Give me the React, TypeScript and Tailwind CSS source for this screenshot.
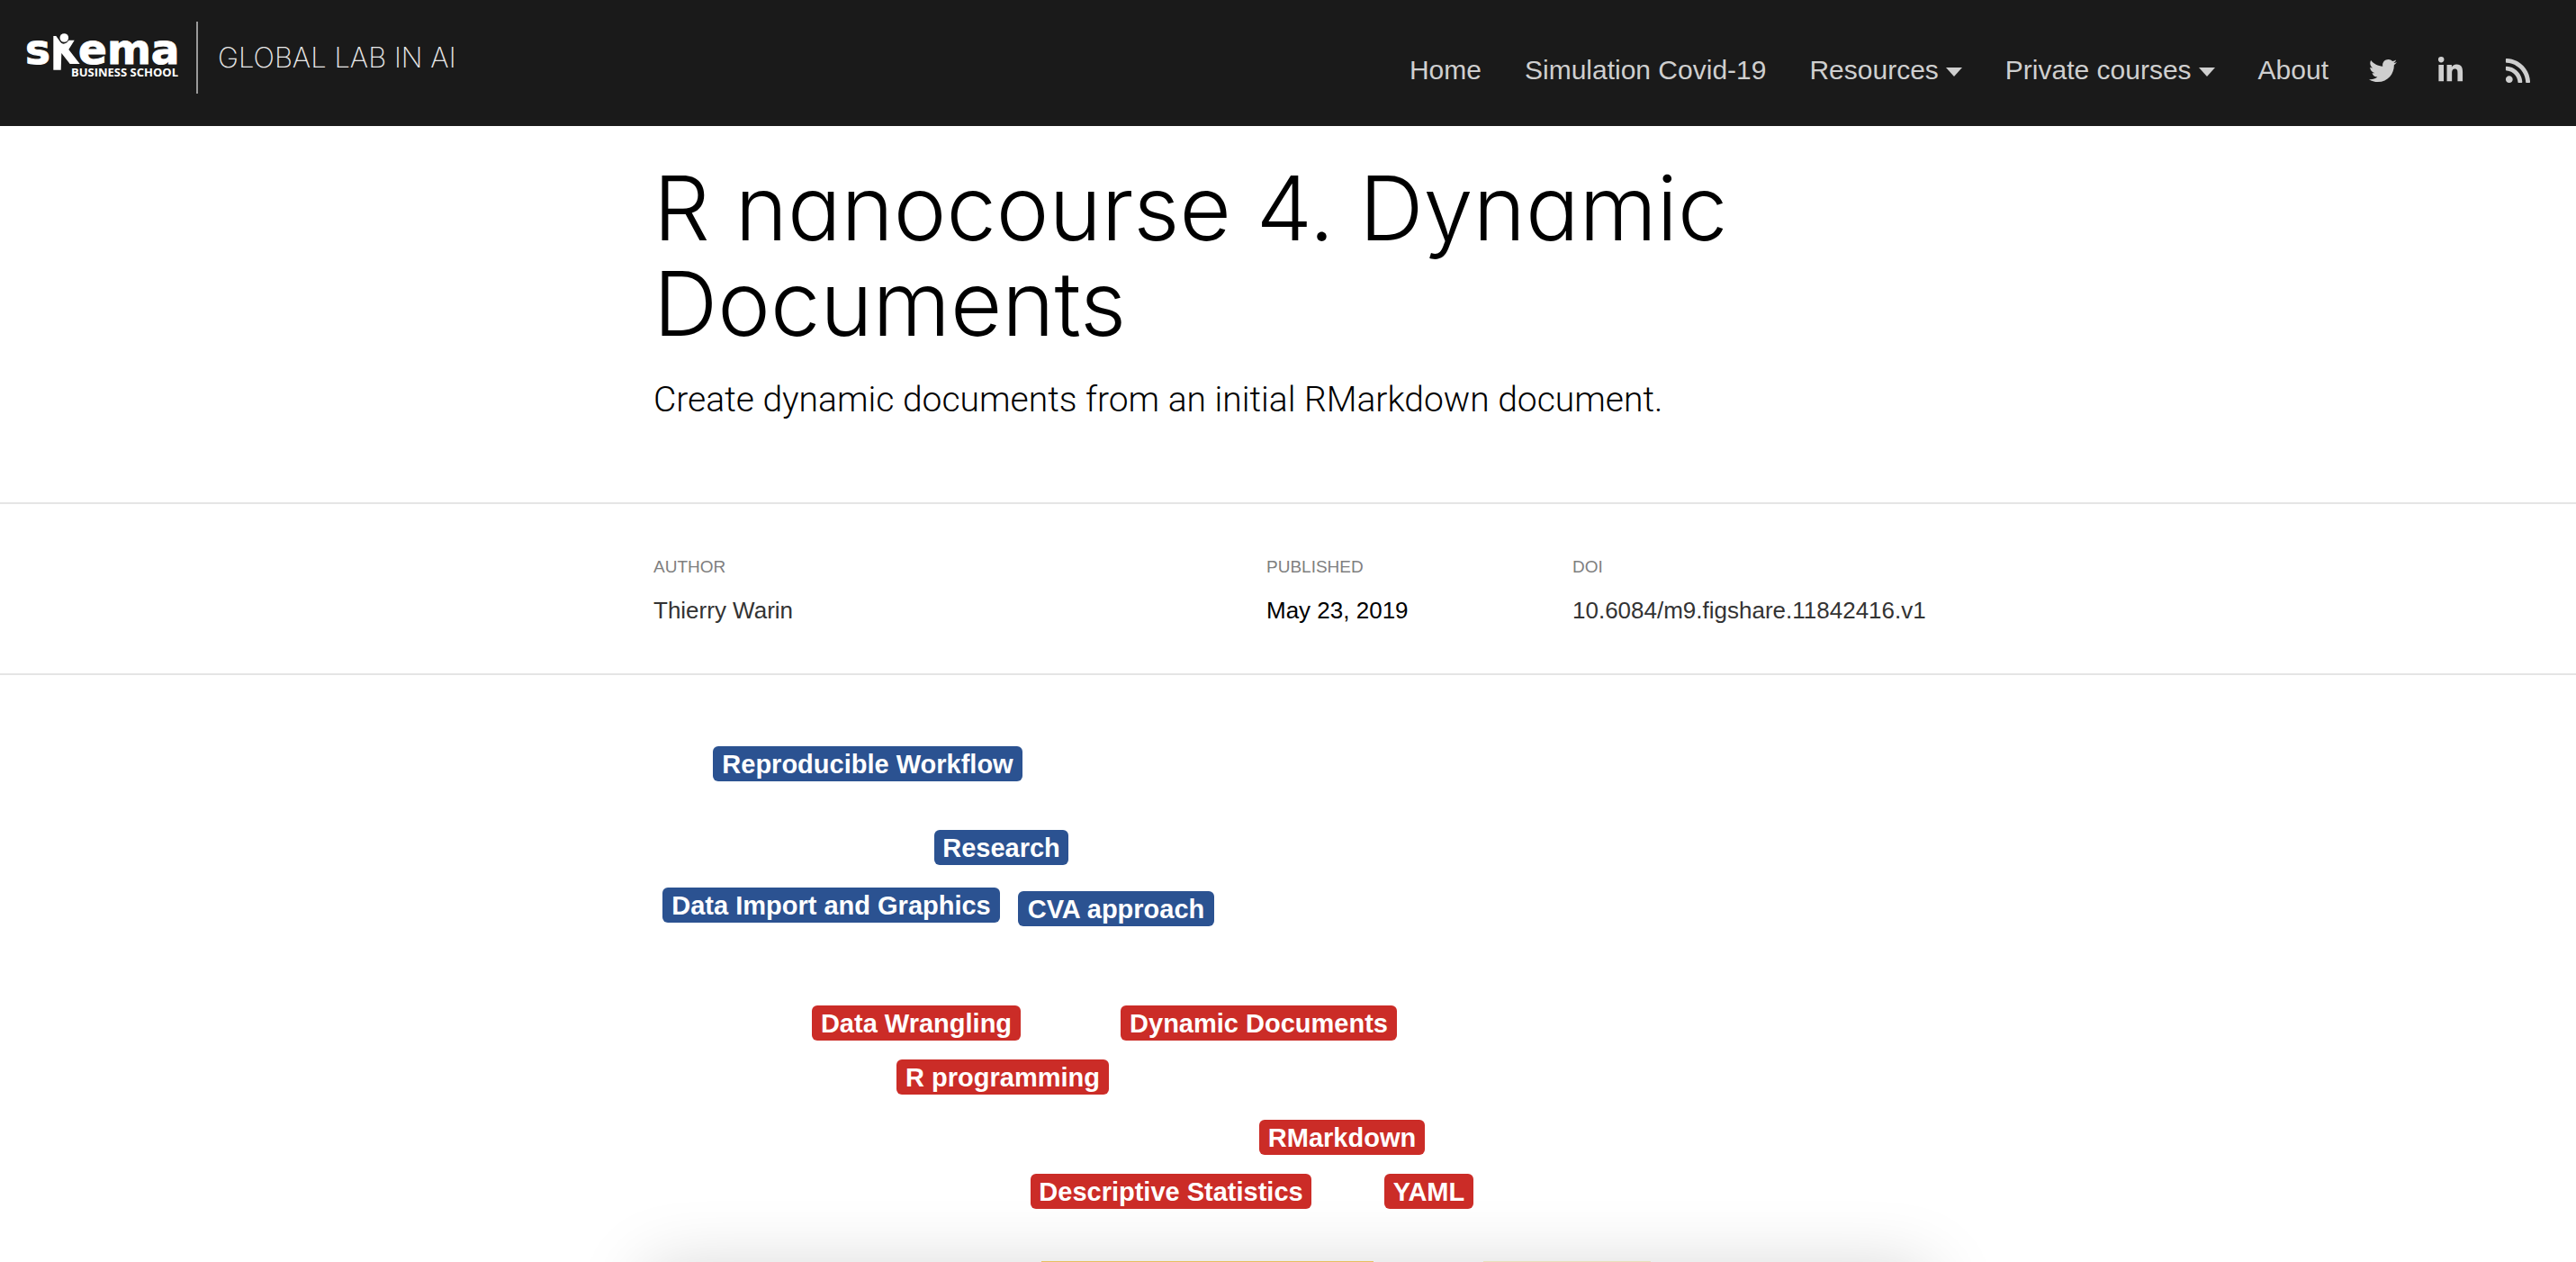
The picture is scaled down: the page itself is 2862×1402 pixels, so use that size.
import { FaTwitter, FaLinkedinIn, FaRss } from "react-icons/fa";

const navText = "text-[30px] leading-9 text-[#cfcfcf]";
const navIcon = "text-[31px] leading-9 text-[#cfcfcf]";

type Tag = { label: string; x: number; y: number; w: number };

const blueTags: Tag[] = [
  { label: "Reproducible Workflow", x: 792, y: 829, w: 344 },
  { label: "Research", x: 1038, y: 922, w: 149 },
  { label: "Data Import and Graphics", x: 736, y: 986, w: 375 },
  { label: "CVA approach", x: 1131, y: 990, w: 218 },
];

const redTags: Tag[] = [
  { label: "Data Wrangling", x: 902, y: 1117, w: 232 },
  { label: "Dynamic Documents", x: 1245, y: 1117, w: 307 },
  { label: "R programming", x: 996, y: 1177, w: 236 },
  { label: "RMarkdown", x: 1399, y: 1244, w: 184 },
  { label: "Descriptive Statistics", x: 1145, y: 1304, w: 312 },
  { label: "YAML", x: 1538, y: 1304, w: 99 },
];

const MAP_X = 726;
const MAP_Y = 750;

function TagNode({ tag, color }: { tag: Tag; color: string }) {
  return (
    <li
      className={`absolute flex h-[39px] items-center justify-center rounded-md text-[29px] leading-9 font-bold whitespace-nowrap text-white ${color}`}
      style={{ left: tag.x - MAP_X, top: tag.y - MAP_Y, width: tag.w }}
    >
      {tag.label}
    </li>
  );
}

function Caret() {
  return (
    <svg viewBox="0 0 18 10" className="mt-1 h-[10px] w-[18px]" aria-hidden="true">
      <path d="M0 0H18L9 10Z" fill="currentColor" />
    </svg>
  );
}

function Logo() {
  return (
    <svg viewBox="0 0 184 104" className="h-[104px] w-[184px]" role="img" aria-label="skema Business School">
      <g fill="#fff">
        <text x="0" y="59" fontFamily="DejaVu Sans" fontWeight="700" fontSize="47" stroke="#fff" strokeWidth="1">s</text>
        <path d="M31.3 28H34.3L39.3 35Q42 38 46 35.5L48.5 32.7H54.7L48.3 43L60.7 59H49.7L40.3 47L39.7 65.7H31.3Z" />
        <circle cx="43.3" cy="30" r="4.8" />
        <text x="59" y="59" fontFamily="DejaVu Sans" fontWeight="700" fontSize="47" stroke="#fff" strokeWidth="1">ema</text>
        <text x="51" y="73" fontFamily="Open Sans" fontWeight="700" fontSize="13">BUSINESS SCHOOL</text>
      </g>
    </svg>
  );
}

export default function App() {
  return (
    <div className="min-h-screen bg-white font-['Liberation_Sans',Arial,sans-serif] text-black">
      <header className="flex h-[140px] items-start justify-between bg-[#1a1a1a] pr-[49px] pl-7">
        <a href="#" className="flex items-center pt-3">
          <Logo />
          <span className="ml-[6px] h-20 w-[2px] bg-[#999]" />
          <span className="ml-[22px] font-['Inter',sans-serif] text-[31px] leading-9 font-extralight text-[#e8e8e8]">
            GLOBAL LAB IN AI
          </span>
        </a>
        <nav className="flex items-center gap-[45px] pt-[60px]">
          <div className="flex items-center gap-12">
            <a href="#" className={navText}>Home</a>
            <a href="#" className={navText}>Simulation Covid-19</a>
            <button className={`flex items-center gap-2 ${navText}`}>
              Resources
              <Caret />
            </button>
            <button className={`flex items-center gap-2 ${navText}`}>
              Private courses
              <Caret />
            </button>
            <a href="#" className={navText}>About</a>
          </div>
          <div className="flex items-center gap-11">
            <a href="#" aria-label="Twitter" className={navIcon}><FaTwitter /></a>
            <a href="#" aria-label="LinkedIn" className={navIcon}><FaLinkedinIn /></a>
            <a href="#" aria-label="RSS" className={navIcon}><FaRss /></a>
          </div>
        </nav>
      </header>

      <main className="overflow-hidden">
        <section className="mx-auto w-full max-w-[1410px] pt-[38px] pb-[88px]">
          <h1 className="max-w-[1340px] font-['Inter',sans-serif] text-[99px] leading-[106px] font-light [font-feature-settings:'cv11']">
            R nanocourse 4. Dynamic Documents
          </h1>
          <p className="mt-7 font-['Roboto',sans-serif] text-[39px] leading-[52px] font-light">
            Create dynamic documents from an initial RMarkdown document.
          </p>
        </section>

        <section className="border-y-2 border-[#e5e5e5]">
          <dl className="mx-auto grid h-[188px] w-full max-w-[1410px] grid-cols-[681px_340px_1fr] content-center pt-[3px] text-[26px]">
            <div>
              <dt className="text-[19px] leading-6 text-[#7f7f7f]">AUTHOR</dt>
              <dd className="mt-5 leading-8 text-[#333]">Thierry Warin</dd>
            </div>
            <div>
              <dt className="text-[19px] leading-6 text-[#7f7f7f]">PUBLISHED</dt>
              <dd className="mt-5 leading-8">May 23, 2019</dd>
            </div>
            <div>
              <dt className="text-[19px] leading-6 text-[#7f7f7f]">DOI</dt>
              <dd className="mt-5 leading-8"><a href="#" className="text-[#333]">10.6084/m9.figshare.11842416.v1</a></dd>
            </div>
          </dl>
        </section>

        <section className="mx-auto w-full max-w-[1410px]">
          <ul className="relative h-[652px]">
            <li className="absolute top-[661px] -left-[6px] h-20 w-[1422px] shadow-[0_0_80px_rgba(0,0,0,0.18)]" />
            {blueTags.map((t) => <TagNode key={t.label} tag={t} color="bg-[#2b5291]" />)}
            {redTags.map((t) => <TagNode key={t.label} tag={t} color="bg-[#cb2c27]" />)}
            <li className="absolute top-[651px] left-[431px] h-px w-[369px] bg-[#e8bf60]" />
            <li className="absolute top-[651px] left-[922px] h-px w-[186px] bg-[#e9e0bc]" />
          </ul>
        </section>
      </main>
    </div>
  );
}
